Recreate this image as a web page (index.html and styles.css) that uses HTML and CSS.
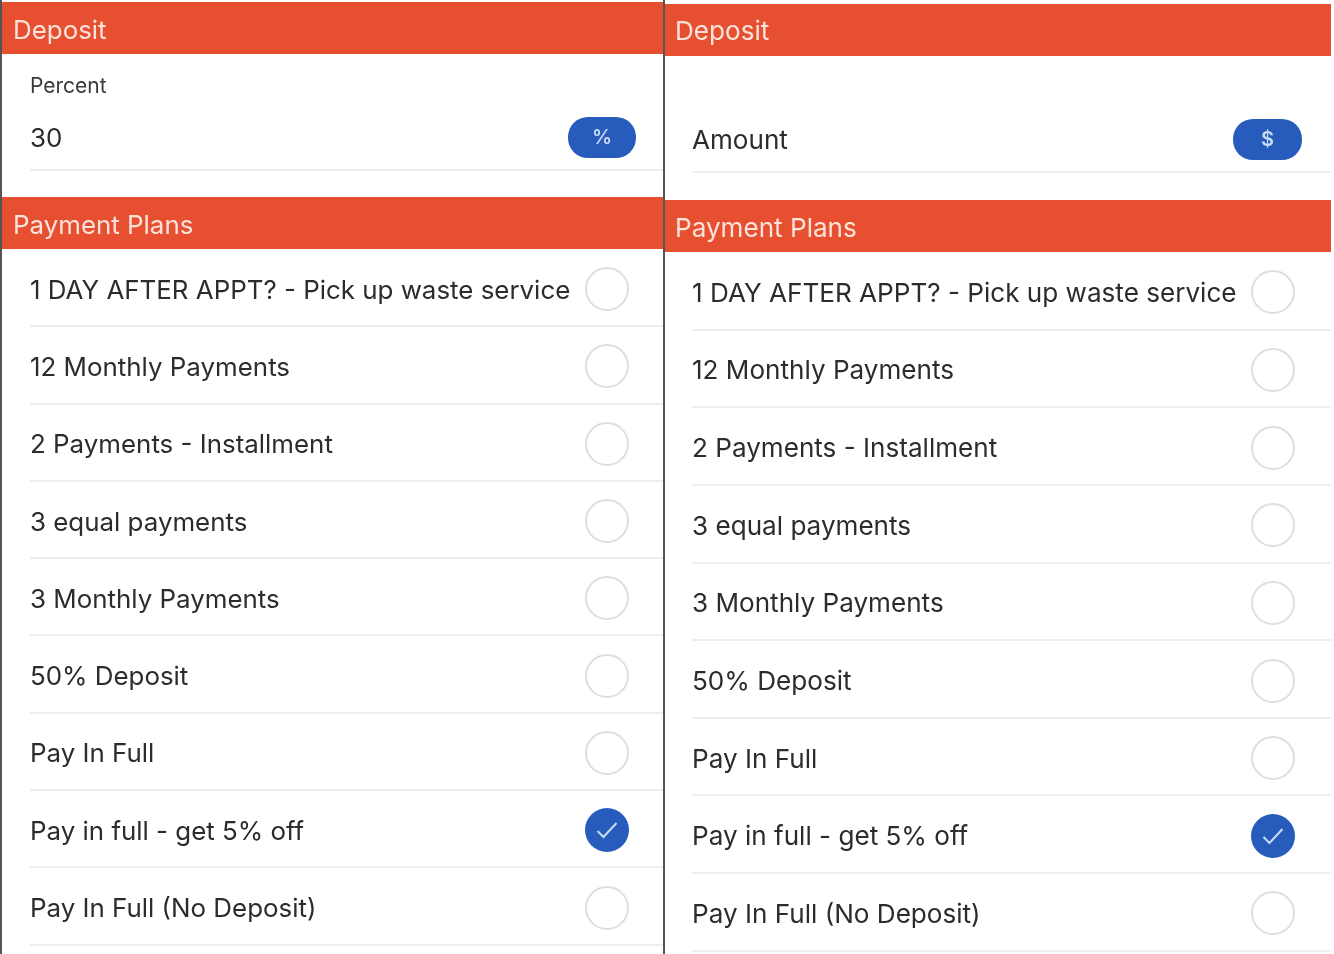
FILE: index.html
```html
<!DOCTYPE html>
<html lang="en">
<head>
<meta charset="utf-8">
<title>Deposit and Payment Plans</title>
<link rel="stylesheet" href="styles.css">
</head>
<body>
<main class="screens">
  <section class="panel panel-left">
    <h2 class="band">Deposit</h2>
    <div class="deposit">
      <div class="field-label">Percent</div>
      <div class="field-row">
        <span class="field-value">30</span>
        <span class="toggle">%</span>
      </div>
    </div>
    <h2 class="band">Payment Plans</h2>
    <ul class="plans">
      <li class="plan"><span>1 DAY AFTER APPT? - Pick up waste service</span><i class="radio"></i></li>
      <li class="plan"><span>12 Monthly Payments</span><i class="radio"></i></li>
      <li class="plan"><span>2 Payments - Installment</span><i class="radio"></i></li>
      <li class="plan"><span>3 equal payments</span><i class="radio"></i></li>
      <li class="plan"><span>3 Monthly Payments</span><i class="radio"></i></li>
      <li class="plan"><span>50% Deposit</span><i class="radio"></i></li>
      <li class="plan"><span>Pay In Full</span><i class="radio"></i></li>
      <li class="plan"><span>Pay in full - get 5% off</span><i class="radio radio-on"><svg viewBox="0 0 44 44" class="check"><path d="M12.5 23l6 6 13-14"/></svg></i></li>
      <li class="plan"><span>Pay In Full (No Deposit)</span><i class="radio"></i></li>
    </ul>
  </section>
  <section class="panel panel-right">
    <h2 class="band">Deposit</h2>
    <div class="deposit">
      <div class="field-label">&nbsp;</div>
      <div class="field-row">
        <span class="field-value">Amount</span>
        <span class="toggle">$</span>
      </div>
    </div>
    <h2 class="band">Payment Plans</h2>
    <ul class="plans">
      <li class="plan"><span>1 DAY AFTER APPT? - Pick up waste service</span><i class="radio"></i></li>
      <li class="plan"><span>12 Monthly Payments</span><i class="radio"></i></li>
      <li class="plan"><span>2 Payments - Installment</span><i class="radio"></i></li>
      <li class="plan"><span>3 equal payments</span><i class="radio"></i></li>
      <li class="plan"><span>3 Monthly Payments</span><i class="radio"></i></li>
      <li class="plan"><span>50% Deposit</span><i class="radio"></i></li>
      <li class="plan"><span>Pay In Full</span><i class="radio"></i></li>
      <li class="plan"><span>Pay in full - get 5% off</span><i class="radio radio-on"><svg viewBox="0 0 44 44" class="check"><path d="M12.5 23l6 6 13-14"/></svg></i></li>
      <li class="plan"><span>Pay In Full (No Deposit)</span><i class="radio"></i></li>
    </ul>
  </section>
</main>
</body>
</html>
```
FILE: styles.css
```css
* { box-sizing: border-box; }
html, body { margin: 0; height: 954px; overflow: hidden; background: #fff; }
body { font-family: Inter, "Liberation Sans", sans-serif; color: #2c2c2e; }
.screens { display: flex; width: 1331px; height: 954px; filter: blur(0.5px); }
.panel { height: 954px; overflow: hidden; padding-top: 2px; }
.panel-left { width: 665px; border-left: 2px solid #555; border-right: 2px solid #555; --row: 77.3px; --inset: 28px; --radio-gap: 34px; --pad: 11px; --dep: 143px; --type: 25.9px; }
.panel-right { width: 666px; padding-top: 4px; --row: 77.65px; --inset: 27px; --radio-gap: 36px; --pad: 10px; --dep: 144px; --type: 26.1px; }
.band { margin: 0; height: 52px; padding: 2px 0 0 var(--pad); display: flex; align-items: center; background: #e65031; color: #fbe3dc; font-size: var(--type); font-weight: 400; }
.panel-right .band:first-child { padding-top: 0; }
.deposit { height: var(--dep); padding: 20px 0 0 var(--inset); }
.field-label { font-size: 21px; line-height: 24px; color: #3a3a3c; }
.field-row { display: flex; justify-content: space-between; align-items: center; height: 62px; margin-top: 11px; padding: 0 27px 2px 0; border-bottom: 2px solid #eeeeee; }
.panel-right .field-row { padding-right: 29px; }
.panel-right .toggle { width: 69px; }
.field-value { font-size: var(--type); margin-bottom: 2px; }
.toggle { width: 68px; height: 41px; margin-bottom: 2px; border-radius: 20px; background: #275cbd; color: #c9daf3; font-size: 20px; font-weight: 600; display: flex; align-items: center; justify-content: center; }
.plans { list-style: none; margin: 0; padding: 1px 0 0 var(--inset); }
.plan { display: flex; justify-content: space-between; align-items: center; height: var(--row); padding: 3px var(--radio-gap) 0 0; border-bottom: 2px solid #eeeeee; font-size: var(--type); white-space: nowrap; }
.radio { flex: none; width: 44px; height: 44px; border-radius: 50%; border: 2px solid #dedede; display: block; }
.radio-on { border: 0; background: #275cbd; }
.check { display: block; width: 44px; height: 44px; fill: none; stroke: #c9daf3; stroke-width: 2; }
```
